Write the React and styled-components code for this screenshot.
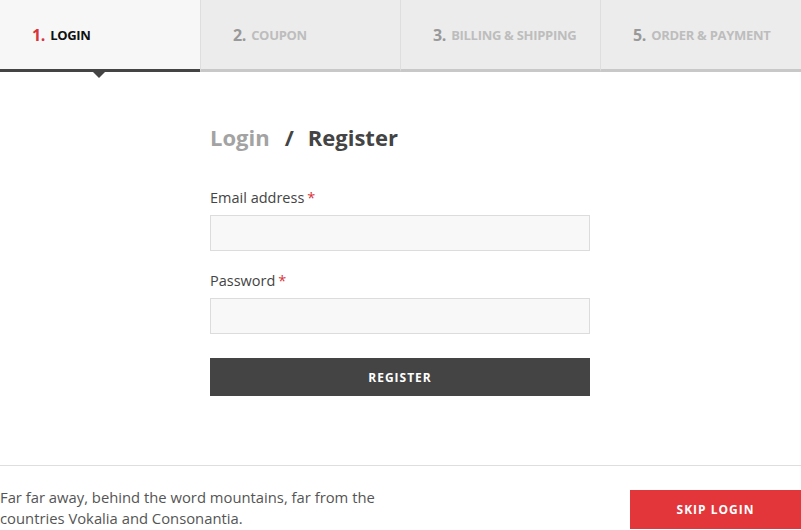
import styled, { createGlobalStyle } from 'styled-components'

const GlobalStyle = createGlobalStyle`
body{
  margin:0;
  background:#fff;
  font-family:'Open Sans', 'Liberation Sans', sans-serif;
}
`

const Page = styled.div`
width:801px;
height:530px;
display:flex;
flex-direction:column;
overflow:hidden;
`

const Steps = styled.div`
display:grid;
grid-template-columns:200px 200px 200px 201px;
`

const Step = styled.div`
position:relative;
display:flex;
align-items:center;
padding-left:32px;
box-sizing:border-box;
background:${p => p.active ? '#f7f7f7' : '#ececec'};
border-left:${p => p.first ? 'none' : '1px solid #dedede'};
border-bottom:3px solid ${p => p.active ? '#444' : '#c8c8c8'};
height:72px;
font-size:13px;
font-weight:700;
text-transform:uppercase;
letter-spacing:-0.3px;
color:${p => p.active ? '#111' : '#bdbdbd'};
&::after{
  content:${p => p.active ? "''" : 'none'};
  position:absolute;
  left:93px;
  bottom:-9px;
  border-left:6px solid transparent;
  border-right:6px solid transparent;
  border-top:6px solid #444;
}
`

const Num = styled.span`
font-size:16px;
margin-right:5px;
color:${p => p.active ? '#d9343a' : '#999'};
`

const Main = styled.div`
flex:1;
padding:50px 0 0 210px;
`

const Form = styled.form`
width:380px;
display:flex;
flex-direction:column;
`

const Title = styled.h2`
margin:0 0 36px;
font-size:22px;
font-weight:700;
color:#444;
line-height:30px;
`

const Muted = styled.span`
color:#a3a3a3;
`

const Slash = styled.span`
margin:0 14px 0 15px;
`

const Label = styled.label`
font-size:14.5px;
color:#444;
line-height:20px;
margin-bottom:7px;
`

const Star = styled.span`
color:#d9343a;
margin-left:3px;
`

const Input = styled.input`
height:36px;
box-sizing:border-box;
background:#f8f8f8;
border:1px solid #dcdcdc;
outline:none;
margin-bottom:${p => p.last ? '24px' : '20px'};
`

const Button = styled.button`
height:38px;
border:none;
background:#444;
color:#fff;
font-family:inherit;
font-size:12px;
font-weight:700;
letter-spacing:1px;
`

const Footer = styled.div`
box-sizing:border-box;
border-top:1px solid #dedede;
display:flex;
justify-content:space-between;
align-items:flex-start;
height:65px;
`

const Note = styled.p`
margin:21px 0 0;
font-size:14.8px;
line-height:21px;
color:#555;
width:400px;
`

const Skip = styled.button`
margin-top:24px;
width:171px;
height:39px;
border:none;
background:#e2363b;
color:#fff;
font-family:inherit;
font-size:12px;
font-weight:700;
letter-spacing:1px;
`

const steps = [
  { n: '1.', label: 'Login' },
  { n: '2.', label: 'Coupon' },
  { n: '3.', label: 'Billing & Shipping' },
  { n: '5.', label: 'Order & Payment' },
]

export default function App(){
  return(
    <Page>
      <GlobalStyle />
      <Steps>
        {steps.map((s, i) => (
          <Step key={s.n} active={i === 0} first={i === 0}>
            <Num active={i === 0}>{s.n}</Num>{s.label}
          </Step>
        ))}
      </Steps>
      <Main>
        <Form onSubmit={(e) => e.preventDefault()}>
          <Title><Muted>Login</Muted><Slash>/</Slash>Register</Title>
          <Label>Email address<Star>*</Star></Label>
          <Input type="email" />
          <Label>Password<Star>*</Star></Label>
          <Input type="password" last />
          <Button type="submit">REGISTER</Button>
        </Form>
      </Main>
      <Footer>
        <Note>Far far away, behind the word mountains, far from the countries Vokalia and Consonantia.</Note>
        <Skip>SKIP LOGIN</Skip>
      </Footer>
    </Page>
  )
}
